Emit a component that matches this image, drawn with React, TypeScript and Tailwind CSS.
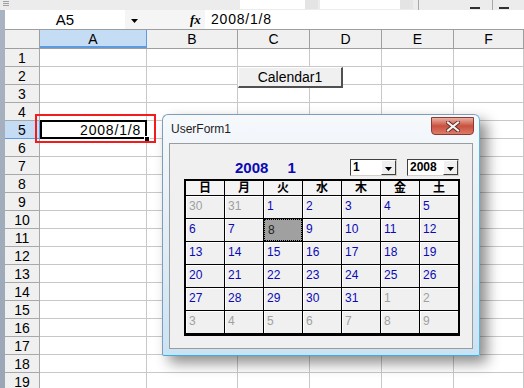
import React from "react";

const cols = [
  { l: "A", w: "w-[107px]", sel: true },
  { l: "B", w: "w-[91px]", sel: false },
  { l: "C", w: "w-[72px]", sel: false },
  { l: "D", w: "w-[72px]", sel: false },
  { l: "E", w: "w-[72px]", sel: false },
  { l: "F", w: "w-[70px]", sel: false },
];

const rows = Array.from({ length: 19 }, (_, i) => i + 1);

const days = ["日", "月", "火", "水", "木", "金", "土"];

// [day, inMonth]
const weeks: [number, boolean][][] = [
  [[30, false], [31, false], [1, true], [2, true], [3, true], [4, true], [5, true]],
  [[6, true], [7, true], [8, true], [9, true], [10, true], [11, true], [12, true]],
  [[13, true], [14, true], [15, true], [16, true], [17, true], [18, true], [19, true]],
  [[20, true], [21, true], [22, true], [23, true], [24, true], [25, true], [26, true]],
  [[27, true], [28, true], [29, true], [30, true], [31, true], [1, false], [2, false]],
  [[3, false], [4, false], [5, false], [6, false], [7, false], [8, false], [9, false]],
];

function Arrow() {
  return (
    <svg width="7" height="4" viewBox="0 0 7 4">
      <path d="M0 0H7L3.5 4Z" fill="#000" />
    </svg>
  );
}

function Combo({ value, w }: { value: string; w: string }) {
  return (
    <div className={`${w} h-[17px] flex bg-white border border-t-[#404040] border-l-[#404040] border-b-[#d4d0c8] border-r-[#d4d0c8]`}>
      <div className="flex-1 pl-[2px] text-[12px] leading-[15px] font-bold text-black">{value}</div>
      <div className="w-[15px] h-[15px] bg-[#f0f0f0] border border-t-white border-l-white border-b-[#404040] border-r-[#404040] flex items-center justify-center pt-[3px]">
        <Arrow />
      </div>
    </div>
  );
}

export default function App() {
  return (
    <div className="relative w-[524px] h-[388px] overflow-hidden bg-white font-['Liberation_Sans',_'Noto_Sans_CJK_JP',_sans-serif] text-black">
      {/* toolbar strip */}
      <div className="h-[10px] flex bg-[#ececec]">
        <div className="ml-[3px] w-[6px] flex flex-col gap-[1px] pt-[1px]">
          <div className="h-px bg-[#a0a0a0]" />
          <div className="h-px bg-[#a0a0a0]" />
          <div className="h-px bg-[#a0a0a0]" />
        </div>
        <div className="w-[231px]" />
        <div className="w-[65px] h-[9px] bg-white" />
        <div className="w-[13px] h-[9px] bg-[#e4e4e4]" />
        <div className="w-[2px]" />
        <div className="w-[80px] h-[9px] bg-white" />
        <div className="w-[13px] h-[9px] bg-[#e4e4e4]" />
        <div className="w-[5px]" />
        <div className="w-px bg-[#a8a8a8]" />
        <div className="w-[51px]" />
        <div className="w-[10px] h-[9px] border-b-2 border-[#303030]" />
        <div className="w-[12px]" />
        <div className="w-px bg-[#a8a8a8]" />
        <div className="w-[6px]" />
        <div className="w-[10px] h-[9px] border-b-2 border-[#303030]" />
      </div>

      {/* formula bar */}
      <div className="h-[19px] flex">
        <div className="w-[5px] bg-[#a9b3c1]" />
        <div className="w-[120px] bg-white text-center text-[15px] leading-[19px]">A5</div>
        <div className="w-[80px] bg-[#f5f5f5] flex items-center">
          <div className="ml-[6px] pt-[2px]">
            <Arrow />
          </div>
          <span className="ml-[52px] font-['Liberation_Serif'] italic font-bold text-[13px]">fx</span>
        </div>
        <div className="flex-1 bg-white pl-[6px] text-[14px] leading-[19px] tracking-[0.8px]">2008/1/8</div>
      </div>

      {/* sheet */}
      <div className="flex">
        <div className="w-[5px] shrink-0 bg-gradient-to-b from-[#a9b3c1] to-[#9aa6b6]" />
        <div className="flex-1">
          <div className="h-[20px] flex border-t border-b border-[#9e9e9e] bg-[#f0f0f0]">
            <div className="w-[35px] shrink-0 border-r border-[#9e9e9e]" />
            {cols.map((c) => (
              <div
                key={c.l}
                className={`${c.w} shrink-0 border-r text-center text-[14px] leading-[18px] ${
                  c.sel ? "bg-[#c5dcf5] border-r-[#5d9be0] border-b-2 border-b-[#5d9be0]" : "border-[#9e9e9e]"
                }`}
              >
                {c.l}
              </div>
            ))}
          </div>
          {rows.map((r) => (
            <div key={r} className="h-[18px] flex">
              <div
                className={`w-[35px] shrink-0 text-center text-[14px] leading-[18px] border-r border-b ${
                  r === 5 ? "bg-[#c5dcf5] border-b-[#5d9be0] border-r-[#5d9be0]" : "bg-[#f0f0f0] border-[#a8a8a8]"
                }`}
              >
                {r}
              </div>
              {cols.map((c) => (
                <div
                  key={c.l}
                  className={`${c.w} shrink-0 border-r border-b border-[#c8c8c8] text-right pr-[5px] text-[14px] leading-[18px] tracking-[0.8px]`}
                >
                  {r === 5 && c.l === "A" ? "2008/1/8" : ""}
                </div>
              ))}
            </div>
          ))}
        </div>
      </div>

      {/* active cell */}
      <div className="absolute left-[40px] top-[120px] w-[107px] h-[19px] border-2 border-black" />
      <div className="absolute left-[144px] top-[136px] w-[6px] h-[6px] bg-black border border-white" />
      {/* red mark */}
      <div className="absolute left-[35px] top-[114px] w-[121px] h-[29px] border-2 border-[#f21c1c]" />

      {/* sheet button */}
      <div className="absolute left-[238px] top-[67px] w-[105px] h-[21px] bg-[#f0f0f0] border border-t-white border-l-white border-r-2 border-b-2 border-r-[#505050] border-b-[#505050] text-center text-[14px] leading-[18px]">
        Calendar1
      </div>

      {/* UserForm window */}
      <div className="absolute left-[162px] top-[114px] w-[318px] h-[242px] flex flex-col rounded-t-[6px] rounded-b-[2px] border border-[#7f9db9] border-b-[#3aaee0] border-r-[#5fb4dc] bg-gradient-to-b from-[#f6f9fc] via-[#e3edf6] to-[#c9e3f4] shadow-[7px_7px_14px_rgba(0,0,0,0.45)]">
        <div className="h-[28px] flex items-start justify-between">
          <span className="ml-[8px] mt-[7px] text-[12px] leading-[14px] text-[#1e1e1e]">UserForm1</span>
          <div className="mr-[5px] mt-[2px] w-[43px] h-[18px] rounded-b-[4px] border border-[#8a3a30] bg-gradient-to-b from-[#eab0a4] via-[#c8503f] to-[#dd7a66] flex items-center justify-center">
            <svg width="14" height="11" viewBox="0 0 14 11">
              <path d="M2 1.5L12 9.5M12 1.5L2 9.5" stroke="#5a2a24" strokeWidth="4" strokeLinecap="square" />
              <path d="M2 1.5L12 9.5M12 1.5L2 9.5" stroke="#f4f0f0" strokeWidth="2.2" strokeLinecap="square" />
            </svg>
          </div>
        </div>
        <div className="mx-[6px] h-[206px] bg-[#f0f0f0] border border-[#9c9c9c] pl-[14px] pt-[15px]">
          <div className="h-[17px] flex items-center">
            <div className="w-[166px] pl-[51px] flex text-[15px] leading-[17px] font-bold text-[#0a0ab4]">
              <span>2008</span>
              <span className="ml-[19px]">1</span>
            </div>
            <Combo value="1" w="w-[47px]" />
            <div className="w-[10px]" />
            <Combo value="2008" w="w-[52px]" />
          </div>
          <div className="mt-[3px] w-[276px] bg-black border-2 border-b-[3px] border-black grid grid-cols-[repeat(7,38px)] gap-px">
            {days.map((d) => (
              <div key={d} className="h-[14px] bg-[#f4f4f4] text-center text-[12px] leading-[14px] font-bold">
                {d}
              </div>
            ))}
            {weeks.flat().map(([n, cur], i) => {
              const sel = cur && n === 8;
              return (
                <div
                  key={i}
                  className={`h-[22px] pl-[3px] pt-[3px] text-[12px] leading-[14px] ${
                    sel
                      ? "bg-[#a0a0a0] text-[#202020] border border-dotted border-black pl-[2px] pt-[2px]"
                      : cur
                      ? "bg-[#f0f0f0] text-[#0a0ab4] shadow-[inset_1px_1px_0_#ffffff]"
                      : "bg-[#f0f0f0] text-[#a0a0a0] shadow-[inset_1px_1px_0_#ffffff]"
                  }`}
                >
                  {n}
                </div>
              );
            })}
          </div>
        </div>
      </div>
    </div>
  );
}
